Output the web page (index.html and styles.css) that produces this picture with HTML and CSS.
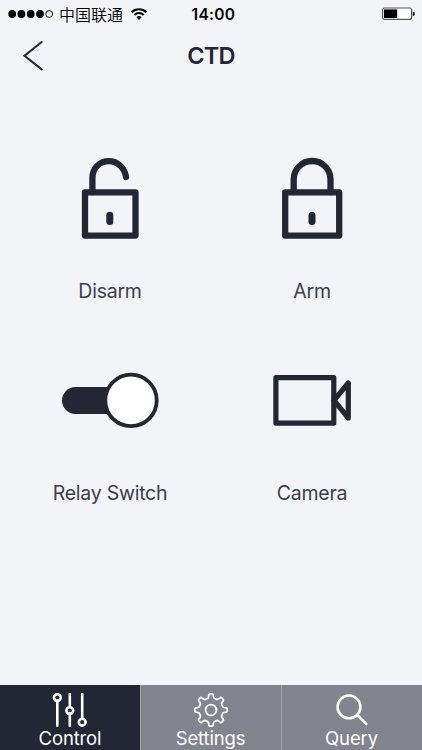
FILE: index.html
```html
<!DOCTYPE html>
<html lang="en">
<head>
  <meta charset="UTF-8" />
  <meta name="viewport" content="width=device-width, initial-scale=1.0" />
  <title>CTD</title>
  <link rel="stylesheet" href="styles.css">
</head>
<body>
  <div class="status-bar">
    <div class="carrier">
      <svg class="signal" width="45" height="10" viewBox="0 0 45 10">
        <circle cx="4.2" cy="5" r="3.9" />
        <circle cx="13.4" cy="5" r="3.9" />
        <circle cx="22.7" cy="5" r="3.9" />
        <circle cx="32" cy="5" r="3.9" />
        <circle class="empty" cx="41.2" cy="5" r="3.4" />
      </svg>
      <span class="carrier-name" lang="zh-CN">中国联通</span>
      <svg class="wifi" width="18" height="14" viewBox="0 0 18 14">
        <path d="M1.6 5.2A10.6 10.6 0 0 1 16.4 5.2" />
        <path d="M4.3 8A6.8 6.8 0 0 1 13.7 8" />
        <path class="dot" d="M6.3 10.3A3.8 3.8 0 0 1 11.7 10.3L9 13Z" />
      </svg>
    </div>
    <div class="time">14:00</div>
    <svg class="battery" width="34" height="14" viewBox="0 0 34 14">
      <rect class="shell" x="1.6" y="1" width="29" height="11.4" rx="2" />
      <rect x="3" y="2.4" width="13.2" height="8.6" />
      <path d="M31.8 4.7H32.6a1 1 0 0 1 1 1V7.8a1 1 0 0 1-1 1H31.8Z" />
    </svg>
  </div>

  <header class="header">
    <button class="back" aria-label="Back">
      <svg width="24" height="32" viewBox="0 0 24 32">
        <path d="M19.7 2L2.5 15.8L19.7 29.3" />
      </svg>
    </button>
    <h1>CTD</h1>
  </header>

  <main class="grid">
    <div class="item">
      <svg width="100" height="100" viewBox="0 0 100 100">
        <rect x="25" y="44.4" width="50.5" height="43.2" />
        <path d="M32.4 44V30C32.4 20 39.5 13.2 48.8 13.2C57.5 13.2 64.5 19.5 66 29" />
        <path class="keyhole" d="M49.8 67.2V73.6" />
      </svg>
      <span>Disarm</span>
    </div>
    <div class="item">
      <svg width="100" height="100" viewBox="0 0 100 100">
        <rect x="23.2" y="44.4" width="54" height="43.2" />
        <path d="M31.7 44V31.4A18.4 18.4 0 0 1 68.5 31.4V44" />
        <path class="keyhole" d="M50 67.2V73.6" />
      </svg>
      <span>Arm</span>
    </div>
    <div class="item">
      <svg width="100" height="100" viewBox="0 0 100 100">
        <path class="track" d="M15.5 50.5H60" />
        <circle class="knob" cx="71" cy="50.4" r="25.7" />
      </svg>
      <span>Relay Switch</span>
    </div>
    <div class="item">
      <svg class="camera" width="100" height="100" viewBox="0 0 100 100">
        <rect x="13.9" y="27.7" width="57.9" height="45.4" />
        <path d="M72 50.4L86.3 33V68Z" />
      </svg>
      <span>Camera</span>
    </div>
  </main>

  <nav class="tabs">
    <a class="tab active">
      <svg width="38" height="36" viewBox="0 0 38 36">
        <path d="M6.3 8.3V33.8M18.8 2V13.3M18.8 21V33.8M31.2 2V25.2" />
        <circle cx="6.3" cy="5.6" r="3.4" />
        <circle cx="18.8" cy="18.6" r="3.4" />
        <circle cx="31.2" cy="30.2" r="3.4" />
      </svg>
      <span>Control</span>
    </a>
    <a class="tab">
      <svg class="gear" width="38" height="36" viewBox="0 0 38 36">
        <path id="gear" />
        <circle cx="19" cy="18" r="5.4" />
      </svg>
      <span>Settings</span>
    </a>
    <a class="tab">
      <svg class="search" width="38" height="36" viewBox="0 0 38 36">
        <circle cx="16" cy="14.9" r="11.4" />
        <path d="M24.2 23L33.3 32" />
      </svg>
      <span>Query</span>
    </a>
  </nav>

  <script>
    // gear outline: 8 teeth around the centre
    function gearPath(cx, cy, outer, inner) {
      const point = (r, deg) => {
        const a = deg * Math.PI / 180;
        return (cx + r * Math.cos(a)).toFixed(2) + " " + (cy + r * Math.sin(a)).toFixed(2);
      };

      let d = "M" + point(inner, -22.5);
      for (let i = 0; i < 8; i++) {
        const a = i * 45;
        d += "Q" + point(inner - 0.4, a - 14) + " " + point(inner + 1.6, a - 10);
        d += "L" + point(outer - 0.8, a - 8);
        d += "Q" + point(outer + 0.2, a - 6) + " " + point(outer, a - 3);
        d += "L" + point(outer, a + 3);
        d += "Q" + point(outer + 0.2, a + 6) + " " + point(outer - 0.8, a + 8);
        d += "L" + point(inner + 1.6, a + 10);
        d += "Q" + point(inner - 0.4, a + 14) + " " + point(inner, a + 22.5);
      }
      return d + "Z";
    }

    document.getElementById("gear").setAttribute("d", gearPath(19, 18, 16.2, 12));
  </script>
</body>
</html>
```

FILE: styles.css
```css
html, body {
  height: 100%;
  margin: 0;
  padding: 0;
}

body {
  display: flex;
  flex-direction: column;
  background-color: #f2f4f7;
  color: #232733;
  font-family: Inter, "Noto Sans CJK SC", sans-serif;
  overflow: hidden;
}

svg {
  display: block;
  flex: none;
}

.status-bar {
  display: grid;
  grid-template-columns: 1fr auto 1fr;
  align-items: center;
  height: 28px;
  padding: 0 7px 0 8px;
  color: #000;
}

.carrier {
  display: flex;
  align-items: center;
}

.carrier-name {
  margin: 0 7px 0 6px;
  padding-bottom: 1px;
  font-family: "Noto Sans CJK SC", sans-serif;
  font-size: 16px;
  font-weight: 350;
  line-height: 26px;
  white-space: nowrap;
}

.signal .empty {
  fill: none;
  stroke: #000;
  stroke-width: 0.9;
}

.wifi {
  fill: none;
  stroke: #000;
  stroke-width: 2;
}

.wifi .dot {
  fill: #000;
  stroke: none;
}

.time {
  padding-left: 4px;
  font-size: 15.5px;
  font-weight: 600;
  letter-spacing: 0.3px;
}

.battery {
  justify-self: end;
}

.battery .shell {
  fill: #fff;
  stroke: #555;
  stroke-width: 1.2;
}

.header {
  display: grid;
  grid-template-columns: 60px 1fr 60px;
  align-items: center;
  height: 56px;
}

.back {
  margin: 0 0 0 22px;
  padding: 0;
  width: 24px;
  border: none;
  background: none;
  cursor: pointer;
}

.back path {
  fill: none;
  stroke: #232733;
  stroke-width: 2.1;
  stroke-linecap: round;
}

h1 {
  margin: 0 0 2px;
  font-size: 23.5px;
  font-weight: 600;
  letter-spacing: -0.7px;
  text-align: center;
}

.grid {
  flex: 1;
  display: grid;
  grid-template-columns: 202px 202px;
  grid-auto-rows: 202px;
  padding: 28px 9px 0;
}

.item {
  display: flex;
  flex-direction: column;
  align-items: center;
  padding-top: 36px;
  font-size: 19.5px;
  line-height: 24px;
  letter-spacing: -0.25px;
  color: #3b3e4a;
}

.item span {
  margin-top: 31px;
}

.item svg {
  fill: none;
  stroke: #232733;
  stroke-width: 6.3;
  stroke-linecap: round;
  stroke-linejoin: round;
}

.item .keyhole {
  stroke-width: 7;
}

.item .track {
  stroke-width: 27;
}

.item .knob {
  fill: #fff;
  stroke-width: 3.8;
}

.item .camera {
  stroke-width: 5.2;
}

.tabs {
  display: grid;
  grid-template-columns: 140px 141px 141px;
  height: 65px;
  background-color: #82848e;
}

.tab {
  display: flex;
  flex-direction: column;
  align-items: center;
  padding: 7px 1px 0 0;
  box-sizing: border-box;
  border-left: 1px solid #a3a5ad;
  font-size: 18.5px;
  line-height: 20px;
  letter-spacing: -0.15px;
  color: #fff;
}

.tab.active {
  padding-right: 0;
  border-left: none;
  background-color: #232733;
}

.tab svg {
  fill: none;
  stroke: #fff;
  stroke-width: 2.6;
  stroke-linecap: round;
}

.tab .gear {
  stroke-width: 1.8;
}
```
